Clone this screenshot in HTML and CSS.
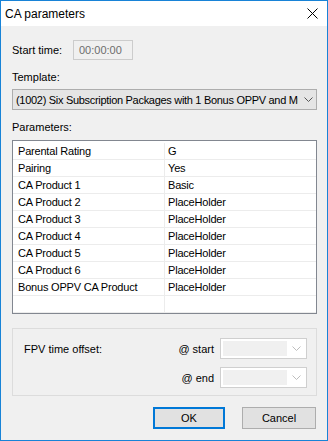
FILE: index.html
```html
<!DOCTYPE html>
<html>
<head>
<meta charset="utf-8">
<title>CA parameters</title>
<link rel="stylesheet" href="styles.css">
</head>
<body>
<div class="window">
  <div class="titlebar">
    <span class="title">CA parameters</span>
    <svg class="close" width="11" height="11" viewBox="0 0 11 11"><path d="M0.5 0.5 L10.5 10.5 M10.5 0.5 L0.5 10.5" stroke="#000" stroke-width="1" fill="none"/></svg>
  </div>
  <div class="body">
    <div class="start-row">
      <span class="start-lbl">Start time:</span>
      <div class="timebox">00:00:00</div>
    </div>
    <div class="lbl lbl-template">Template:</div>
    <div class="combo">
      <span class="combo-text">(1002) Six Subscription Packages with 1 Bonus OPPV and Multiple PPV</span>
      <svg class="chev" width="9" height="5" viewBox="0 0 9 5"><path d="M0.5 0.5 L4.5 4.5 L8.5 0.5" stroke="#555" stroke-width="1" fill="none"/></svg>
    </div>
    <div class="lbl lbl-params">Parameters:</div>
    <div class="list">
      <div class="row"><div class="cell">Parental Rating</div><div class="cell">G</div></div>
      <div class="row"><div class="cell">Pairing</div><div class="cell">Yes</div></div>
      <div class="row"><div class="cell">CA Product 1</div><div class="cell">Basic</div></div>
      <div class="row"><div class="cell">CA Product 2</div><div class="cell">PlaceHolder</div></div>
      <div class="row"><div class="cell">CA Product 3</div><div class="cell">PlaceHolder</div></div>
      <div class="row"><div class="cell">CA Product 4</div><div class="cell">PlaceHolder</div></div>
      <div class="row"><div class="cell">CA Product 5</div><div class="cell">PlaceHolder</div></div>
      <div class="row"><div class="cell">CA Product 6</div><div class="cell">PlaceHolder</div></div>
      <div class="row"><div class="cell">Bonus OPPV CA Product</div><div class="cell">PlaceHolder</div></div>
      <div class="row"><div class="cell"></div><div class="cell"></div></div>
    </div>
    <div class="group">
      <span class="fpv-lbl">FPV time offset:</span>
      <span class="at-lbl">@ start</span>
      <div class="small-combo"><div class="sel"></div><svg class="chev-light" width="9" height="5" viewBox="0 0 9 5"><path d="M0.5 0.5 L4.5 4.5 L8.5 0.5" stroke="#bdbdbd" stroke-width="1" fill="none"/></svg></div>
      <span></span>
      <span class="at-lbl">@ end</span>
      <div class="small-combo"><div class="sel"></div><svg class="chev-light" width="9" height="5" viewBox="0 0 9 5"><path d="M0.5 0.5 L4.5 4.5 L8.5 0.5" stroke="#bdbdbd" stroke-width="1" fill="none"/></svg></div>
    </div>
    <div class="buttons">
      <div class="btn btn-ok">OK</div>
      <div class="btn btn-cancel">Cancel</div>
    </div>
  </div>
</div>
</body>
</html>
```
FILE: styles.css
```css
* { box-sizing: border-box; }
html, body { margin: 0; padding: 0; }
body {
  font-family: "Liberation Sans", Arial, sans-serif;
  font-size: 11px;
  color: #000;
  background: #fff;
}
.window {
  width: 328px;
  height: 441px;
  border: 1px solid #1883d7;
  background: #f0f0f0;
  display: flex;
  flex-direction: column;
}
.titlebar {
  flex: none;
  height: 25px;
  background: #fff;
  display: flex;
  align-items: center;
  justify-content: space-between;
  padding: 0 9px 0 4px;
}
.title { font-size: 12px; }
.close { display: block; }
.body {
  flex: 1;
  display: flex;
  flex-direction: column;
  padding: 14px 10px 0 11px;
}
.start-row {
  display: flex;
  align-items: center;
  height: 20px;
}
.start-lbl { width: 61px; }
.timebox {
  width: 60px;
  height: 20px;
  border: 1px solid #cccccc;
  background: #f0f0f0;
  color: #6d6d6d;
  padding-left: 5px;
  line-height: 18px;
}
.lbl { line-height: 15px; height: 15px; }
.lbl-template { margin-top: 10px; }
.combo {
  margin-top: 4px;
  height: 21px;
  border: 1px solid #adadad;
  background: #e5e5e5;
  display: flex;
  align-items: center;
  padding: 0 3px 0 3px;
}
.combo-text {
  width: 282px;
  overflow: hidden;
  white-space: nowrap;
  flex: none;
  letter-spacing: -0.3px;
}
.chev { margin-left: auto; display: block; }
.lbl-params { margin-top: 10px; }
.list {
  margin-top: 5px;
  height: 174px;
  border: 1px solid #828790;
  background: #fff;
  padding: 2px 0 0 0;
}
.row {
  display: grid;
  grid-template-columns: 152px 1fr;
  height: 17px;
  border-bottom: 1px solid #ececec;
}
.cell {
  line-height: 16px;
  padding-left: 5px;
  white-space: nowrap;
  letter-spacing: -0.2px;
}
.cell:first-child { border-right: 1px solid #ececec; }
.cell:last-child { padding-left: 3px; }
.group {
  margin-top: 14px;
  height: 68px;
  border: 1px solid #dcdcdc;
  padding: 9px 9px 0 11px;
  display: grid;
  grid-template-columns: 1fr auto 87px;
  grid-auto-rows: 21px;
  column-gap: 6px;
  row-gap: 8px;
  align-items: center;
}
.at-lbl { text-align: right; }
.small-combo {
  height: 21px;
  border: 1px solid #cfcfcf;
  background: #fff;
  display: flex;
  align-items: center;
  padding: 0 5px 0 2px;
}
.sel {
  width: 64px;
  height: 15px;
  background: #f0f0f0;
}
.chev-light { margin-left: auto; display: block; }
.buttons {
  margin-top: 11px;
  display: flex;
  justify-content: flex-end;
  gap: 17px;
  padding-right: 1px;
}
.btn {
  height: 22px;
  border: 1px solid #adadad;
  background: #e1e1e1;
  display: flex;
  align-items: center;
  justify-content: center;
}
.btn-ok { width: 72px; border: 2px solid #0078d7; }
.btn-cancel { width: 74px; }
```
